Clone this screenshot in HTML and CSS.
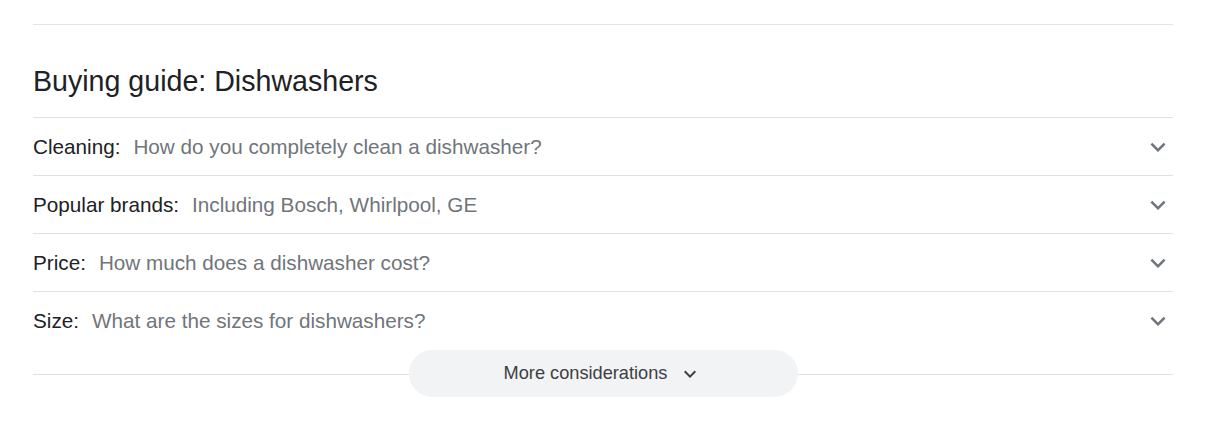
FILE: index.html
```html
<!DOCTYPE html>
<html lang="en">
<head>
  <meta charset="UTF-8">
  <meta name="viewport" content="width=device-width, initial-scale=1.0">
  <title>Buying guide: Dishwashers</title>
  <link rel="stylesheet" href="styles.css">
</head>
<body>

  <div class="guide">
    <h2 class="guide-title">Buying guide: Dishwashers</h2>

    <div class="guide-list">
      <div class="guide-row">
        <span class="guide-label">Cleaning:</span>
        <span class="guide-question">How do you completely clean a dishwasher?</span>
        <svg class="chevron" viewBox="0 0 24 24"><path d="M7.41 8.59 12 13.17l4.59-4.58L18 10l-6 6-6-6z"/></svg>
      </div>
      <div class="guide-row">
        <span class="guide-label">Popular brands:</span>
        <span class="guide-question">Including Bosch, Whirlpool, GE</span>
        <svg class="chevron" viewBox="0 0 24 24"><path d="M7.41 8.59 12 13.17l4.59-4.58L18 10l-6 6-6-6z"/></svg>
      </div>
      <div class="guide-row">
        <span class="guide-label">Price:</span>
        <span class="guide-question">How much does a dishwasher cost?</span>
        <svg class="chevron" viewBox="0 0 24 24"><path d="M7.41 8.59 12 13.17l4.59-4.58L18 10l-6 6-6-6z"/></svg>
      </div>
      <div class="guide-row">
        <span class="guide-label">Size:</span>
        <span class="guide-question">What are the sizes for dishwashers?</span>
        <svg class="chevron" viewBox="0 0 24 24"><path d="M7.41 8.59 12 13.17l4.59-4.58L18 10l-6 6-6-6z"/></svg>
      </div>
    </div>

    <div class="more">
      <button class="more-button" type="button">
        More considerations
        <svg class="more-chevron" viewBox="0 0 24 24"><path d="M7.41 8.59 12 13.17l4.59-4.58L18 10l-6 6-6-6z"/></svg>
      </button>
    </div>
  </div>

</body>
</html>
```

FILE: styles.css
```css
body {
    margin: 0;
    background-color: #fff;
    font-family: 'Liberation Sans', Arial, sans-serif;
    color: #202124;
}

.guide {
    width: 1140px;
    margin: 24px 0 0 33px;
    border-top: 1px solid #e3e4e7;
}

.guide-title {
    margin: 38px 0 18px 0;
    font-size: 28.6px;
    line-height: 36px;
    font-weight: 400;
    color: #202124;
}

.guide-row {
    display: flex;
    align-items: center;
    height: 57px;
    border-top: 1px solid #dfe1e5;
    font-size: 20.7px;
}

.guide-label {
    color: #202124;
    margin-right: 13px;
}

.guide-question {
    flex: 1;
    color: #70757a;
}

.chevron {
    width: 30px;
    height: 30px;
    fill: #70757a;
}

.more {
    position: relative;
    display: flex;
    justify-content: center;
    padding-top: 1px;
}

.more::before {
    content: "";
    position: absolute;
    left: 0;
    right: 0;
    top: 25px;
    border-top: 1px solid #dfe1e5;
}

.more-button {
    position: relative;
    display: flex;
    align-items: center;
    justify-content: center;
    width: 389px;
    height: 47px;
    padding: 0;
    border: none;
    border-radius: 24px;
    background-color: #f1f3f4;
    color: #3c4043;
    font-family: 'Liberation Sans', Arial, sans-serif;
    font-size: 18.2px;
    cursor: pointer;
}

.more-chevron {
    width: 24px;
    height: 24px;
    margin-left: 11px;
    fill: #3c4043;
}
```
